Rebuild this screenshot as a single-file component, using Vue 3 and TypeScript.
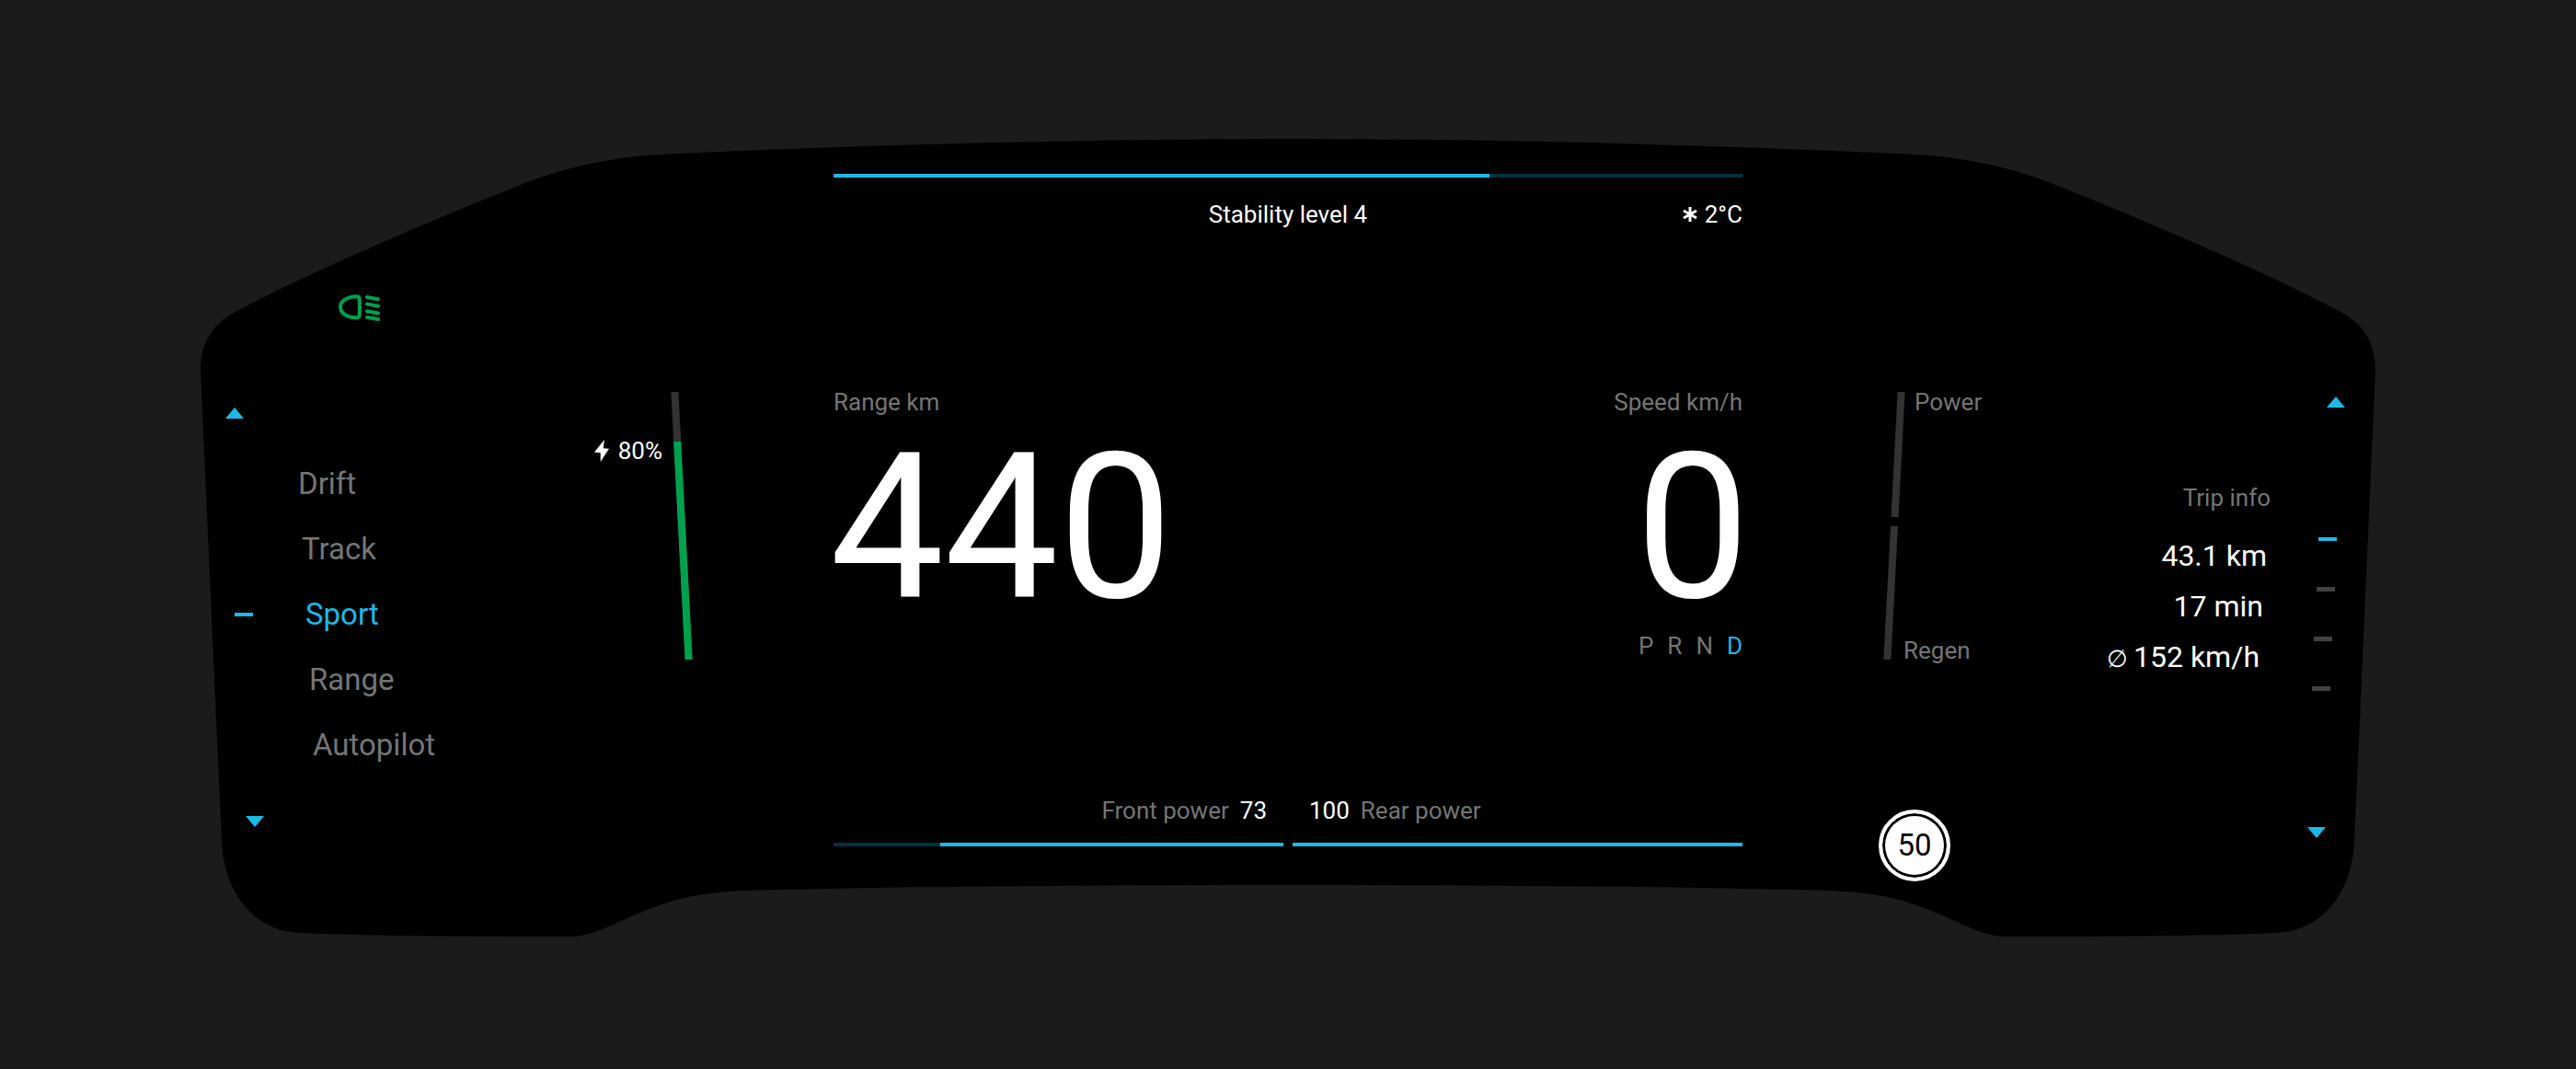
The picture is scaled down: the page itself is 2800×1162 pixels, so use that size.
<script setup lang="ts">
import { ref } from 'vue'

const modes = ['Drift', 'Track', 'Sport', 'Range', 'Autopilot']
const activeMode = ref('Sport')

const gears = ['P', 'R', 'N', 'D']
const activeGear = ref('D')

const trip = [
  { average: false, value: '43.1 km' },
  { average: false, value: '17 min' },
  { average: true, value: '152 km/h' },
]

const pages = ['Trip info', 'Media', 'Navigation', 'Phone']
const activePage = ref(0)

const stability = 72.2
const battery = 80
const batteryFill = 81.6
const frontPower = 73
const frontFill = 76.2
const rearPower = 100

const cycleMode = (step: number) => {
  const next = modes.indexOf(activeMode.value) + step
  activeMode.value = modes[(next + modes.length) % modes.length]
}
const cyclePage = (step: number) => {
  activePage.value = (activePage.value + step + pages.length) % pages.length
}

// The side lists lean with the slanted edges of the panel.
const modeIndent = (i: number) => `${29 + 4 * i}px`
const tripIndent = (i: number) => `${4 * (i + 1)}px`
const pageIndent = (i: number) => `${Math.round(12 - 2.4 * i)}px`
</script>

<template>
  <main class="page">
    <section class="cluster" aria-label="Instrument cluster">
      <svg class="shape" viewBox="0 0 2364 867" preserveAspectRatio="none" aria-hidden="true">
        <path
          d="M0 252 C0 222 12 202 38 188 C110 149 240 93 345 51 C400 29 455 18 518 16 C740 6 960 0 1182 0
             C1404 0 1624 6 1846 16 C1909 18 1964 29 2019 51 C2124 93 2254 149 2326 188 C2352 202 2364 222 2364 252
             L2341 765 C2338 822 2304 861 2257 863 C2164 867 2064 867 1962 867 C1939 867 1919 855 1891 843
             C1849 825 1819 819 1770 817 C1574 812 1374 811 1182 811 C990 811 790 812 594 817
             C545 819 515 825 473 843 C445 855 425 867 402 867 C300 867 200 867 107 863
             C60 861 26 822 23 765 Z"
        />
      </svg>

      <div class="side left">
        <div class="modes">
          <svg class="headlight" viewBox="0 0 45 29" role="img" aria-label="Low beam on">
            <path d="M19.500 2.200 C8 2.500 2 8 2 13.700 S8 25 19.500 25.300 Q22.800 25.300 22.800 22 V5.500 Q22.800 2.200 19.500 2.200Z" />
            <path d="M31 3 L43 5.200 M31 10.400 L43 12.700 M31 18.200 L43 20.500 M31 24.900 L43 27" />
          </svg>
          <button class="arrow mode-up" type="button" aria-label="Previous mode" @click="cycleMode(-1)">
            <svg viewBox="0 0 20 12"><path d="M10 0 L20 12 H0Z" /></svg>
          </button>
          <ul class="mode-list">
            <li v-for="(mode, i) in modes" :key="mode">
              <button
                type="button"
                class="mode"
                :class="{ active: mode === activeMode }"
                :style="{ marginLeft: modeIndent(i) }"
                @click="activeMode = mode"
              >
                <span class="dash"></span>{{ mode }}
              </button>
            </li>
          </ul>
          <button class="arrow mode-down" type="button" aria-label="Next mode" @click="cycleMode(1)">
            <svg viewBox="0 0 20 12"><path d="M0 0 H20 L10 12Z" /></svg>
          </button>
        </div>

        <div class="battery">
          <div class="battery-label">
            <svg viewBox="0 0 16 24" aria-hidden="true"><path d="M11 0 L0 13.500 L6.700 14.300 V24 L16 9.800 L9.700 9.300Z" /></svg>
            <span>{{ battery }}%</span>
          </div>
          <div class="battery-bar">
            <div class="battery-fill" :style="{ height: batteryFill + '%' }"></div>
          </div>
        </div>
      </div>

      <div class="center">
        <div class="bar"><div class="fill" :style="{ width: stability + '%' }"></div></div>
        <div class="status">
          <span class="stability">Stability level 4</span>
          <span class="temp">
            <svg viewBox="0 0 16 16" aria-hidden="true"><path d="M8 0 V16 M1 4 L15 12 M15 4 L1 12" /></svg>
            <span>2°C</span>
          </span>
        </div>

        <div class="readouts">
          <div class="readout">
            <span class="label">Range km</span>
            <span class="number">440</span>
          </div>
          <div class="readout speed">
            <span class="label">Speed km/h</span>
            <span class="number">0</span>
            <div class="gears">
              <span v-for="gear in gears" :key="gear" :class="{ active: gear === activeGear }">{{ gear }}</span>
            </div>
          </div>
        </div>

        <div class="axles">
          <div class="axle front">
            <div class="axle-text"><span class="label">Front power</span><span>{{ frontPower }}</span></div>
            <div class="bar"><div class="fill" :style="{ width: frontFill + '%' }"></div></div>
          </div>
          <div class="axle rear">
            <div class="axle-text"><span>{{ rearPower }}</span><span class="label">Rear power</span></div>
            <div class="bar"><div class="fill" :style="{ width: rearPower + '%' }"></div></div>
          </div>
        </div>
      </div>

      <div class="side right">
        <div class="drive">
          <div class="power">
            <div class="power-bars"><div class="power-up"></div><div class="power-down"></div></div>
            <div class="power-labels"><span>Power</span><span>Regen</span></div>
          </div>
          <div class="limit"><span>50</span></div>
        </div>

        <div class="trip">
          <h2>Trip info</h2>
          <ul>
            <li v-for="(row, i) in trip" :key="row.value" :style="{ marginRight: tripIndent(i) }">
              <span v-if="row.average" class="average">∅</span>{{ row.value }}
            </li>
          </ul>
        </div>

        <div class="rail">
          <button class="arrow page-up" type="button" aria-label="Previous page" @click="cyclePage(-1)">
            <svg viewBox="0 0 20 12"><path d="M10 0 L20 12 H0Z" /></svg>
          </button>
          <button
            v-for="(page, i) in pages"
            :key="page"
            type="button"
            class="page-dot"
            :class="{ active: i === activePage }"
            :style="{ marginLeft: pageIndent(i) }"
            :aria-label="page"
            @click="activePage = i"
          >
            <span class="dash"></span>
          </button>
          <button class="arrow page-down" type="button" aria-label="Next page" @click="cyclePage(1)">
            <svg viewBox="0 0 20 12"><path d="M0 0 H20 L10 12Z" /></svg>
          </button>
        </div>
      </div>
    </section>
  </main>
</template>

<style>
body {
  background: #1b1b1b;
}
</style>

<style scoped>
.page {
  --blue: #1cb9e8;
  --blue-dim: #04323f;
  --green: #00a14e;
  --grey: #757575;
  box-sizing: border-box;
  min-height: 100vh;
  padding: 151px 218px 144px;
  background: #1b1b1b;
  color: #fff;
  font-family: Roboto, "Liberation Sans", sans-serif;
  font-size: 26px;
  line-height: 32px;
}

button {
  padding: 0;
  border: 0;
  background: none;
  color: inherit;
  font: inherit;
  cursor: pointer;
}

ul {
  margin: 0;
  padding: 0;
  list-style: none;
}

svg {
  display: block;
}

.cluster {
  position: relative;
  display: grid;
  grid-template-columns: 688fr 988fr 688fr;
}

.shape {
  position: absolute;
  inset: 0;
  width: 100%;
  height: 100%;
  fill: #000;
}

.side,
.center {
  position: relative;
  display: flex;
}

.left {
  justify-content: space-between;
}

.label {
  color: var(--grey);
}

.dash {
  width: 20px;
  height: 4px;
}

.arrow {
  display: block;
  width: 20px;
  height: 12px;
}

.arrow svg {
  width: 20px;
  height: 12px;
  fill: var(--blue);
}

/* Drive modes */
.modes {
  padding-top: 169px;
}

.headlight {
  width: 45px;
  height: 29px;
  margin: 0 0 94px 150px;
  fill: none;
  stroke: var(--green);
  stroke-width: 4;
  stroke-linecap: round;
}

.mode-up {
  margin: 0 0 35px 27px;
}

.mode-down {
  margin: 42px 0 0 49px;
}

.mode {
  display: flex;
  align-items: center;
  gap: 57px;
  color: var(--grey);
  font-size: 33px;
  line-height: 71px;
}

.mode.active {
  color: var(--blue);
}

.mode.active .dash {
  background: var(--blue);
}

/* Battery */
.battery {
  display: flex;
  align-items: flex-start;
  gap: 17px;
  margin-right: 161px;
  padding-top: 275px;
}

.battery-label {
  display: flex;
  align-items: center;
  gap: 10px;
  margin-top: 48px;
}

.battery-label svg {
  width: 16px;
  height: 24px;
  fill: #fff;
}

.battery-bar {
  display: flex;
  align-items: flex-end;
  width: 8px;
  height: 291px;
  background: #333;
  transform: skewX(3deg);
}

.battery-fill {
  width: 100%;
  background: var(--green);
}

/* Centre */
.center {
  flex-direction: column;
  padding: 38px 0 98px;
}

.bar {
  height: 4px;
  background: var(--blue-dim);
}

.fill {
  height: 100%;
  background: var(--blue);
}

.status {
  display: grid;
  grid-template-columns: 1fr auto 1fr;
  margin-top: 24px;
}

.stability {
  grid-column: 2;
}

.temp {
  display: flex;
  align-items: center;
  justify-content: flex-end;
  gap: 8px;
}

.temp svg {
  width: 16px;
  height: 16px;
  stroke: #fff;
  stroke-width: 3;
}

.readouts {
  display: flex;
  justify-content: space-between;
  margin-top: 172px;
}

.readout {
  display: flex;
  flex-direction: column;
}

.number {
  margin: 21px -8px 0 -4px;
  font-size: 221px;
  line-height: 200px;
}

.speed {
  align-items: flex-end;
}

.gears {
  display: flex;
  gap: 15px;
  margin-top: 12px;
  color: var(--grey);
}

.gears .active {
  color: var(--blue);
}

.axles {
  display: grid;
  grid-template-columns: 1fr 1fr;
  gap: 10px;
  margin-top: 147px;
}

.axle-text {
  display: flex;
  gap: 12px;
  margin-bottom: 19px;
  padding: 0 18px;
}

.front .axle-text {
  justify-content: flex-end;
}

.front .bar {
  display: flex;
  justify-content: flex-end;
}

/* Power and regeneration */
.drive {
  padding-top: 270px;
}

.power {
  display: flex;
  gap: 6px;
  height: 302px;
  margin-left: 161px;
}

.power-bars {
  display: flex;
  flex-direction: column;
  gap: 10px;
  width: 8px;
  margin: 5px 0 6px;
  transform: skewX(-3deg);
}

.power-up,
.power-down {
  flex: 136;
  background: #333;
}

.power-down {
  flex: 145;
}

.power-labels {
  display: flex;
  flex-direction: column;
  justify-content: space-between;
  color: var(--grey);
}

.power-labels span:first-child {
  padding-left: 12px;
}

.limit {
  display: flex;
  align-items: center;
  justify-content: center;
  box-sizing: border-box;
  width: 78px;
  height: 78px;
  margin: 157px 0 0 148px;
  border: 4px solid #fff;
  border-radius: 50%;
  background: #fff;
  box-shadow: inset 0 0 0 3px #000;
  color: #000;
  font-size: 33px;
}

/* Trip */
.trip {
  margin-left: auto;
  padding-top: 374px;
  text-align: right;
}

.trip h2 {
  margin: 0 0 20px;
  color: var(--grey);
  font-size: 26px;
  font-weight: 400;
  line-height: 32px;
}

.trip li {
  font-size: 32px;
  line-height: 55px;
}

.average {
  margin-right: 6px;
  font-size: 26px;
}

.rail {
  width: 41px;
  margin: 0 33px 0 40px;
  padding-top: 280px;
}

.page-up {
  margin: 0 0 116px 21px;
}

.page-down {
  margin-top: 124px;
}

.page-dot {
  display: flex;
  align-items: center;
  height: 54px;
}

.page-dot .dash {
  height: 5px;
  background: #424242;
}

.page-dot.active .dash {
  height: 4px;
  background: var(--blue);
}
</style>
